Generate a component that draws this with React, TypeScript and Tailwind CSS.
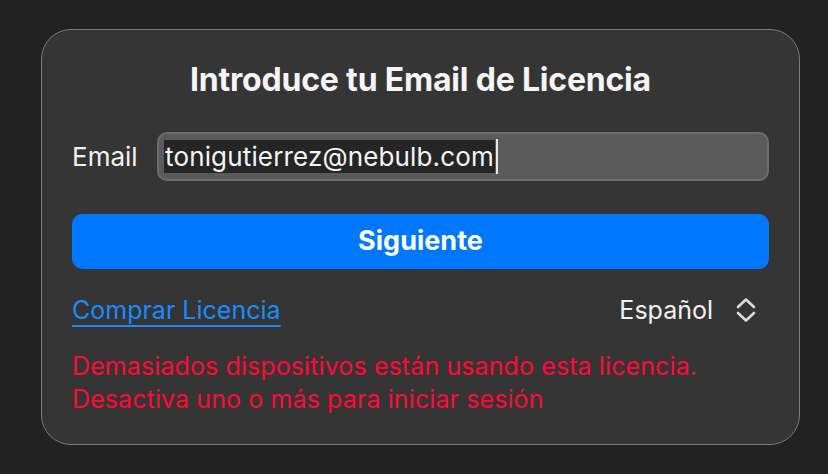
import React from "react";

export default function App() {
  return (
    <div
      className="w-[828px] h-[474px] bg-[#222222] pt-[29px] pl-[41px]"
      style={{ fontFamily: "Inter, 'Noto Sans', sans-serif" }}
    >
      <div className="w-[759px] h-[416px] rounded-[30px] border-[1.5px] border-[#7c7c7c] bg-[#353535] px-[30px] pt-[30px] flex flex-col">
        <h1 className="text-center text-[32px] leading-[40px] font-bold text-[#f5f5f5] tracking-[-0.2px]">
          Introduce tu Email de Licencia
        </h1>
        <div className="mt-[32px] flex items-center h-[49px]">
          <span className="text-[26px] text-[#f2f2f2] w-[85px] shrink-0">Email</span>
          <div className="flex-1 h-[49px] rounded-[10px] border-2 border-[#6c6c6c] bg-[#5b5b5b] flex items-center pl-[5px]">
            <span className="bg-[#252525] text-[26px] tracking-[0.15px] leading-[33px] text-[#f5f5f5] pl-[1px] pr-[1px]">
              tonigutierrez@nebulb.com
            </span>
            <span className="w-[2px] h-[35px] bg-[#e8e8e8] ml-[1px]" />
          </div>
        </div>
        <button className="mt-[33px] h-[55px] w-full rounded-[10px] bg-[#0077ff] text-white text-[27px] font-bold">
          Siguiente
        </button>
        <div className="mt-[26px] flex items-center justify-between h-[30px]">
          <a className="text-[25px] leading-[30px] text-[#1a8cff] underline underline-offset-[6px] decoration-[2px] [text-decoration-skip-ink:none]">
            Comprar Licencia
          </a>
          <div className="flex items-center gap-[22px] pr-[12px]">
            <span className="text-[25px] leading-[30px] text-[#f2f2f2]">Español</span>
            <svg width="22" height="26" viewBox="0 0 22 26" fill="none">
              <path d="M3 10 L11 2.5 L19 10" stroke="#dcdcdc" strokeWidth="2.6" strokeLinecap="round" strokeLinejoin="round" />
              <path d="M3 16 L11 23.5 L19 16" stroke="#dcdcdc" strokeWidth="2.6" strokeLinecap="round" strokeLinejoin="round" />
            </svg>
          </div>
        </div>
        <p className="mt-[25px] text-[25px] tracking-[0.1px] leading-[33px] text-[#ff0a37]">
          Demasiados dispositivos están usando esta licencia.
          <br />
          Desactiva uno o más para iniciar sesión
        </p>
      </div>
    </div>
  );
}
